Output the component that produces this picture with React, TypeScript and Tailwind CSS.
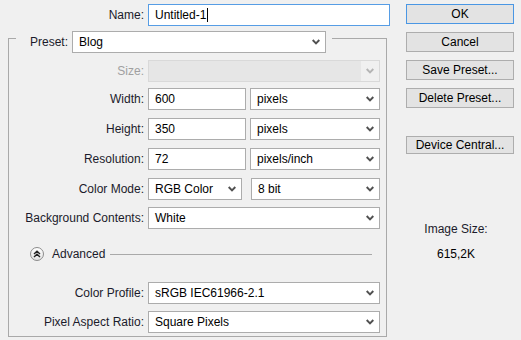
import React from "react";

const Chevron = ({ disabled = false }: { disabled?: boolean }) => (
  <svg width="8" height="6" viewBox="0 0 8 6" className="shrink-0">
    <path d="M0.7 1 L4 4.4 L7.3 1" stroke={disabled ? "#b4b4b4" : "#505050"} strokeWidth="1.9" fill="none" />
  </svg>
);

const Select = ({ value, w, disabled = false }: { value: string; w: string; disabled?: boolean }) => (
  <div
    className={`${w} h-[22px] flex items-center justify-between pl-[6px] pr-[5px] border ${
      disabled ? "border-[#d9d9d9] bg-[#e6e6e6]" : "border-[#acacac] bg-white"
    } text-black`}
  >
    <span>{value}</span>
    <Chevron disabled={disabled} />
  </div>
);

const Input = ({ value, w }: { value: string; w: string }) => (
  <div className={`${w} h-[22px] flex items-center pl-[6px] border border-[#acacac] bg-white text-black`}>{value}</div>
);

const Label = ({ children, disabled = false }: { children: React.ReactNode; disabled?: boolean }) => (
  <div className={`w-[135px] text-right shrink-0 ${disabled ? "text-[#a0a0a0]" : "text-[#1b1b2b]"}`}>{children}</div>
);

const Btn = ({ children, primary = false, h = "h-[20px]", mt }: { children: React.ReactNode; primary?: boolean; h?: string; mt: string }) => (
  <div
    className={`${mt} w-[108px] ${h} flex items-center justify-center border ${
      primary ? "border-[#4a97e4]" : "border-[#adadad]"
    } bg-[#e3e3e3] text-black`}
  >
    {children}
  </div>
);

export default function App() {
  return (
    <div className="w-[521px] h-[340px] bg-[#f0f0f0] flex font-['Liberation_Sans',Arial,sans-serif] text-[12px] leading-[14px] overflow-hidden">
      <div className="w-[390px] pt-[4px] flex flex-col">
        <div className="flex items-center h-[22px]">
          <div className="w-[144px] text-right text-[#1b1b2b]">Name:</div>
          <div className="ml-[4px] w-[242px] h-[22px] flex items-center pl-[6px] border border-[#569de5] bg-white text-black">
            Untitled-1<span className="inline-block w-px h-[14px] bg-black ml-px" />
          </div>
        </div>

        <div className="mt-[5px] ml-[8px] w-[379px] flex flex-col">
          <div className="flex h-[22px]">
            <div className="w-[8px] mt-[7px] border-t border-l border-[#a9a9a9]" />
            <div className="w-[55px] text-right pr-[3px] text-[#1b1b2b] self-center">Preset:</div>
            <Select value="Blog" w="w-[254px] ml-[1px]" />
            <div className="flex-1 ml-[6px] mt-[7px] border-t border-r border-[#a9a9a9]" />
          </div>
          <div className="border-l border-r border-b border-[#a9a9a9] pb-[3px] flex flex-col">
            <div className="flex items-center mt-[7px]">
              <Label disabled>Size:</Label>
              <div className="ml-[4px] w-[232px] h-[22px] flex items-center justify-end border border-[#d9d9d9] bg-[#e6e6e6]">
                <div className="w-[18px] h-full bg-[#f0f0f0] flex items-center justify-center">
                  <Chevron disabled />
                </div>
              </div>
            </div>
            <div className="flex items-center mt-[6px]">
              <Label>Width:</Label>
              <Input value="600" w="ml-[4px] w-[98px]" />
              <Select value="pixels" w="ml-[4px] w-[130px]" />
            </div>
            <div className="flex items-center mt-[8px]">
              <Label>Height:</Label>
              <Input value="350" w="ml-[4px] w-[98px]" />
              <Select value="pixels" w="ml-[4px] w-[130px]" />
            </div>
            <div className="flex items-center mt-[8px]">
              <Label>Resolution:</Label>
              <Input value="72" w="ml-[4px] w-[98px]" />
              <Select value="pixels/inch" w="ml-[4px] w-[130px]" />
            </div>
            <div className="flex items-center mt-[8px]">
              <Label>Color Mode:</Label>
              <Select value="RGB Color" w="ml-[4px] w-[94px]" />
              <Select value="8 bit" w="ml-[9px] w-[129px]" />
            </div>
            <div className="flex items-center mt-[7px]">
              <Label>Background Contents:</Label>
              <Select value="White" w="ml-[4px] w-[232px]" />
            </div>
            <div className="flex items-center h-[18px] mt-[16px]">
              <div className="ml-[21px] w-[14px] h-[14px] rounded-full border border-[#8c8c8c] bg-gradient-to-b from-white to-[#e2e2e2] flex items-center justify-center">
                <svg width="8" height="8" viewBox="0 0 8 8">
                  <path d="M1 4 L4 1.2 L7 4 M1 7 L4 4.2 L7 7" stroke="#222" strokeWidth="1.4" fill="none" />
                </svg>
              </div>
              <span className="ml-[8px] text-[#1b1b2b]">Advanced</span>
              <div className="ml-[5px] w-[262px] border-t border-[#a9a9a9]" />
            </div>
            <div className="flex items-center mt-[19px]">
              <Label>Color Profile:</Label>
              <Select value="sRGB IEC61966-2.1" w="ml-[4px] w-[232px]" />
            </div>
            <div className="flex items-center mt-[7px]">
              <Label>Pixel Aspect Ratio:</Label>
              <Select value="Square Pixels" w="ml-[4px] w-[232px]" />
            </div>
          </div>
        </div>
      </div>

      <div className="ml-[16px] pt-[4px] flex flex-col">
        <Btn mt="mt-0" primary>OK</Btn>
        <Btn mt="mt-[8px]">Cancel</Btn>
        <Btn mt="mt-[8px]">Save Preset...</Btn>
        <Btn mt="mt-[8px]">Delete Preset...</Btn>
        <Btn mt="mt-[28px]" h="h-[18px]">Device Central...</Btn>
        <div className="mt-[68px] w-[108px] text-center text-[#1b1b2b] pr-[8px]">Image Size:</div>
        <div className="mt-[11px] w-[108px] text-center text-black pr-[8px]">615,2K</div>
      </div>
    </div>
  );
}
